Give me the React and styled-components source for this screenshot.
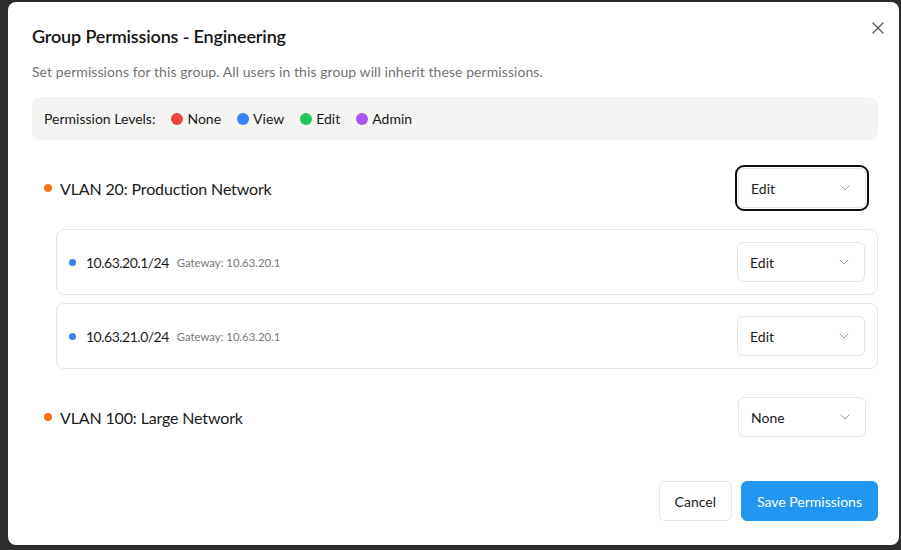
import React from "react";
import styled, { createGlobalStyle, css } from "styled-components";
import { X, ChevronDown } from "lucide-react";

const GlobalStyle = createGlobalStyle`
  html, body { margin: 0; padding: 0; background: #2c2c2c; }
  body { font-family: "Segoe UI", Lato, "Noto Sans", sans-serif; color: #1a1a1a; }
  * { box-sizing: border-box; }
`;

const Backdrop = styled.div`
  min-height: 100vh;
  padding: 2px 2px 0 8px;
`;

const Dialog = styled.div`
  position: relative;
  width: 891px;
  height: 543px;
  background: #fff;
  border-radius: 8px;
  padding: 23px 21px 24px 24px;
  display: flex;
  flex-direction: column;
`;

const CloseButton = styled.button`
  position: absolute;
  top: 16px;
  right: 11px;
  width: 20px;
  height: 20px;
  padding: 0;
  border: none;
  background: none;
  color: #555;
  display: flex;
  align-items: center;
  justify-content: center;
`;

const Title = styled.h2`
  margin: 0;
  font-size: 18px;
  line-height: 22px;
  font-weight: 600;
  letter-spacing: -0.15px;
  color: #151515;
`;

const Description = styled.p`
  margin: 15px 0 0;
  font-size: 14px;
  line-height: 20px;
  letter-spacing: 0.07px;
  color: #737373;
`;

const Legend = styled.div`
  margin-top: 15px;
  height: 43px;
  background: #f4f4f3;
  border-radius: 8px;
  padding: 0 12px;
  display: flex;
  align-items: center;
  gap: 16px;
  font-size: 14px;
`;

const LegendItem = styled.span`
  display: flex;
  align-items: center;
  gap: 4px;
`;

const Dot = styled.span`
  width: ${(p) => p.$size}px;
  height: ${(p) => p.$size}px;
  border-radius: 50%;
  background: ${(p) => p.$color};
  flex-shrink: 0;
`;

const Groups = styled.div`
  margin-top: 16px;
  display: flex;
  flex-direction: column;
  gap: 16px;
`;

const Group = styled.div`
  display: flex;
  flex-direction: column;
  gap: 9px;
`;

const GroupHeader = styled.div`
  display: flex;
  align-items: center;
  justify-content: space-between;
  padding: 12px;
`;

const Label = styled.div`
  display: flex;
  align-items: center;
  gap: 8px;
`;

const GroupName = styled.span`
  font-size: 16px;
  letter-spacing: -0.15px;
  padding-top: 1px;
`;

const Cards = styled.div`
  margin-left: 24px;
  display: flex;
  flex-direction: column;
  gap: 8px;
`;

const Card = styled.div`
  border: 1px solid #e6e6e6;
  border-radius: 8px;
  padding: 12px;
  display: flex;
  align-items: center;
  justify-content: space-between;
`;

const Subnet = styled.span`
  font-size: 14px;
  letter-spacing: -0.5px;
  margin-left: 2px;
`;

const Gateway = styled.span`
  font-size: 11.3px;
  color: #777;
`;

const SelectBox = styled.div`
  width: 128px;
  height: 40px;
  border: 1px solid #e6e6e6;
  border-radius: 6px;
  padding: 0 12px;
  display: flex;
  align-items: center;
  justify-content: space-between;
  font-size: 14px;
  color: #1a1a1a;
  background: #fff;
  ${(p) =>
    p.$focused &&
    css`
      box-shadow: 0 0 0 1px #fff, 0 0 0 3px #111;
    `}
`;

const Footer = styled.div`
  margin-top: auto;
  display: flex;
  justify-content: flex-end;
  gap: 9px;
`;

const Button = styled.button`
  height: 40px;
  padding: 0 15px;
  border-radius: 6px;
  font-family: inherit;
  font-size: 14px;
  ${(p) =>
    p.$primary
      ? css`
          background: #2196f3;
          color: #fff;
          border: 1px solid #2196f3;
        `
      : css`
          background: #fff;
          color: #1a1a1a;
          border: 1px solid #e6e6e6;
        `}
`;

function Select({ value, focused }) {
  return (
    <SelectBox $focused={focused}>
      <span>{value}</span>
      <ChevronDown size={16} strokeWidth={1.5} color="#9a9a9a" />
    </SelectBox>
  );
}

const levels = [
  { name: "None", color: "#ef4444" },
  { name: "View", color: "#3b82f6" },
  { name: "Edit", color: "#22c55e" },
  { name: "Admin", color: "#a855f7" },
];

const vlans = [
  {
    name: "VLAN 20: Production Network",
    value: "Edit",
    focused: true,
    subnets: [
      { cidr: "10.63.20.1/24", gw: "10.63.20.1", value: "Edit" },
      { cidr: "10.63.21.0/24", gw: "10.63.20.1", value: "Edit" },
    ],
  },
  { name: "VLAN 100: Large Network", value: "None", subnets: [] },
];

export default function App() {
  return (
    <>
      <GlobalStyle />
      <Backdrop>
        <Dialog>
          <CloseButton aria-label="Close">
            <X size={20} strokeWidth={1.5} />
          </CloseButton>
          <Title>Group Permissions - Engineering</Title>
          <Description>
            Set permissions for this group. All users in this group will inherit these permissions.
          </Description>
          <Legend>
            <span>Permission Levels:</span>
            {levels.map((l) => (
              <LegendItem key={l.name}>
                <Dot $size={12} $color={l.color} />
                {l.name}
              </LegendItem>
            ))}
          </Legend>
          <Groups>
            {vlans.map((v) => (
              <Group key={v.name}>
                <GroupHeader>
                  <Label>
                    <Dot $size={8} $color="#f97316" />
                    <GroupName>{v.name}</GroupName>
                  </Label>
                  <Select value={v.value} focused={v.focused} />
                </GroupHeader>
                {v.subnets.length > 0 && (
                  <Cards>
                    {v.subnets.map((s) => (
                      <Card key={s.cidr}>
                        <Label>
                          <Dot $size={7} $color="#3b82f6" />
                          <Subnet>{s.cidr}</Subnet>
                          <Gateway>Gateway: {s.gw}</Gateway>
                        </Label>
                        <Select value={s.value} />
                      </Card>
                    ))}
                  </Cards>
                )}
              </Group>
            ))}
          </Groups>
          <Footer>
            <Button>Cancel</Button>
            <Button $primary>Save Permissions</Button>
          </Footer>
        </Dialog>
      </Backdrop>
    </>
  );
}
